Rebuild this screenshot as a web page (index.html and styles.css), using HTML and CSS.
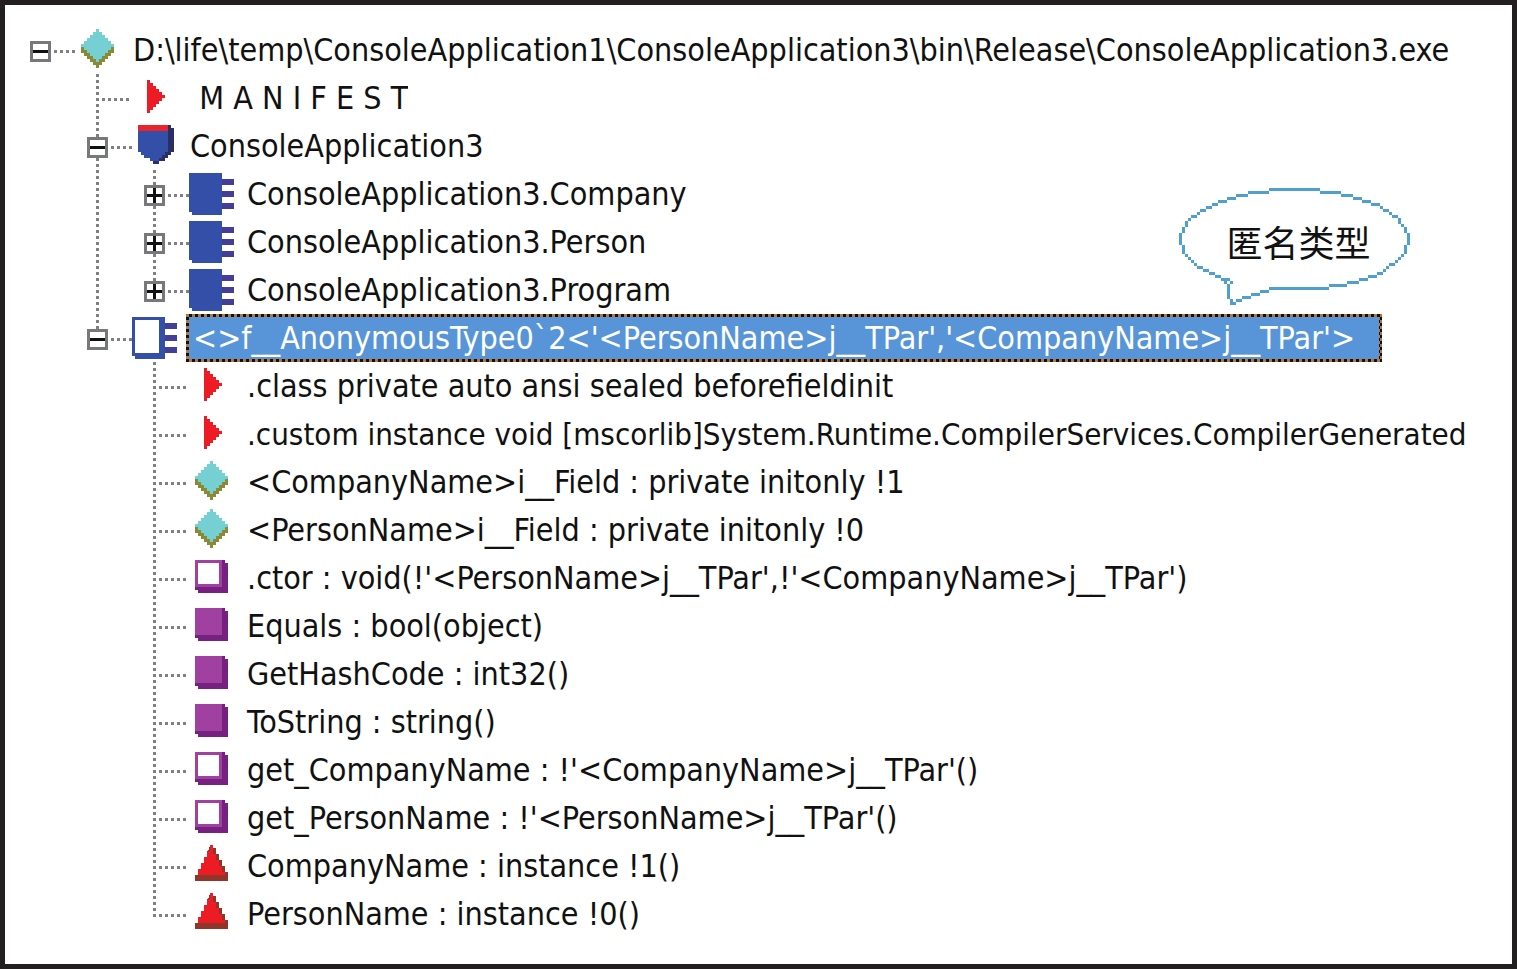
FILE: index.html
```
<!DOCTYPE html>
<html lang="zh-CN">
<head>
<meta charset="utf-8">
<title>ConsoleApplication3.exe</title>
<link rel="stylesheet" href="styles.css">
</head>
<body>
<svg class="sprites" aria-hidden="true">
  <symbol id="diamond" viewBox="0 0 16 16">
    <path fill="#8a8a35" d="M2 6h11v3h-1v1h-1v1h-1v1h-1v1h-1v1h-1v-1h-1v-1h-1v-1h-1v-1h-1v-1h-1z"/>
    <path fill="#74d0d2" d="M7 1h1v1h1v1h1v1h1v1h1v1h1v1h-1v1h-1v1h-1v1h-1v1h-1v1h-1v-1h-1v-1h-1v-1h-1v-1h-1v-1h-1v-1h1v-1h1v-1h1v-1h1v-1h1z"/>
  </symbol>
  <symbol id="arrow" viewBox="0 0 16 16">
    <path fill="#ed1c24" d="M5 2h1v1h1v1h1v1h1v1h1v1h1v1h-1v1h-1v1h-1v1h-1v1h-1v1h-1z"/>
  </symbol>
  <symbol id="shield" viewBox="0 0 16 16">
    <path fill="#2c2f66" d="M11 1h2v1h1v8h-1v1h-1v1h-1v1h-2v1h-2V8H11z"/>
    <path fill="#334fa8" d="M2 3h10v7h-1v1h-1v1h-1v1h-3v-1h-2v-1h-1v-1h-1z"/>
    <path fill="#e6252c" d="M2 1h10v2h-10z"/>
  </symbol>
  <symbol id="class" viewBox="0 0 16 16">
    <path fill="#433f99" d="M11 3h4v2h-4zM11 7h4v2h-4zM11 11h4v2h-4z"/>
    <path fill="#334fa8" d="M0 1h11v14h-10v-1h-1z"/>
  </symbol>
  <symbol id="class-open" viewBox="0 0 16 16">
    <path fill="#433f99" d="M11 3h4v2h-4zM11 7h4v2h-4zM11 11h4v2h-4z"/>
    <path fill="#334fa8" d="M0 1h11v14h-10v-1h-1z"/>
    <path fill="#fff" d="M1 2h8v11h-8z"/>
  </symbol>
  <symbol id="method" viewBox="0 0 16 16">
    <path fill="#76207f" d="M2 2h10v1h1v10h-10v-1h-1z"/>
    <path fill="#a041a2" d="M2 2h9v9h-9z"/>
  </symbol>
  <symbol id="method-open" viewBox="0 0 16 16">
    <path fill="#76207f" d="M2 2h10v1h1v10h-10v-1h-1z"/>
    <path fill="#a041a2" d="M2 2h9v9h-9z"/>
    <path fill="#fff" d="M3 3h7v7h-7z"/>
  </symbol>
  <symbol id="property" viewBox="0 0 16 16">
    <path fill="#8f3529" d="M7 1h1v1h1v2h1v2h1v2h1v2h1v3h-11v-2h2z"/>
    <path fill="#ed1c24" d="M7 1h1v3h1v2h1v2h1v2h1v1h-9v-2h1v-2h1v-2h1v-2h1z"/>
  </symbol>
</svg>

<main class="panel">
  <ul class="tree">
    <li>
      <div class="row"><button class="toggle" type="button" aria-expanded="true" aria-label="Collapse"></button><span class="wire"></span><svg class="icon"><use href="#diamond"/></svg><span class="label">D:\life\temp\ConsoleApplication1\ConsoleApplication3\bin\Release\ConsoleApplication3.exe</span></div>
      <ul class="branch">
        <li><div class="row leaf"><span class="wire"></span><svg class="icon"><use href="#arrow"/></svg><span class="label">&nbsp;M A N I F E S T</span></div></li>
        <li>
          <div class="row"><button class="toggle" type="button" aria-expanded="true" aria-label="Collapse"></button><span class="wire"></span><svg class="icon"><use href="#shield"/></svg><span class="label">ConsoleApplication3</span></div>
          <ul class="branch">
            <li><div class="row"><button class="toggle" type="button" aria-expanded="false" aria-label="Expand"></button><span class="wire"></span><svg class="icon"><use href="#class"/></svg><span class="label">ConsoleApplication3.Company</span></div></li>
            <li><div class="row"><button class="toggle" type="button" aria-expanded="false" aria-label="Expand"></button><span class="wire"></span><svg class="icon"><use href="#class"/></svg><span class="label">ConsoleApplication3.Person</span></div></li>
            <li><div class="row"><button class="toggle" type="button" aria-expanded="false" aria-label="Expand"></button><span class="wire"></span><svg class="icon"><use href="#class"/></svg><span class="label">ConsoleApplication3.Program</span></div></li>
          </ul>
        </li>
        <li>
          <div class="row"><button class="toggle" type="button" aria-expanded="true" aria-label="Collapse"></button><span class="wire"></span><svg class="icon"><use href="#class-open"/></svg><span class="label selected">&lt;&gt;f__AnonymousType0`2&lt;'&lt;PersonName&gt;j__TPar','&lt;CompanyName&gt;j__TPar'&gt;</span></div>
          <ul class="branch">
            <li><div class="row leaf"><span class="wire"></span><svg class="icon"><use href="#arrow"/></svg><span class="label">.class private auto ansi sealed beforefieldinit</span></div></li>
            <li><div class="row leaf"><span class="wire"></span><svg class="icon"><use href="#arrow"/></svg><span class="label long">.custom instance void [mscorlib]System.Runtime.CompilerServices.CompilerGenerated</span></div></li>
            <li><div class="row leaf"><span class="wire"></span><svg class="icon"><use href="#diamond"/></svg><span class="label">&lt;CompanyName&gt;i__Field : private initonly !1</span></div></li>
            <li><div class="row leaf"><span class="wire"></span><svg class="icon"><use href="#diamond"/></svg><span class="label">&lt;PersonName&gt;i__Field : private initonly !0</span></div></li>
            <li><div class="row leaf"><span class="wire"></span><svg class="icon"><use href="#method-open"/></svg><span class="label">.ctor : void(!'&lt;PersonName&gt;j__TPar',!'&lt;CompanyName&gt;j__TPar')</span></div></li>
            <li><div class="row leaf"><span class="wire"></span><svg class="icon"><use href="#method"/></svg><span class="label">Equals : bool(object)</span></div></li>
            <li><div class="row leaf"><span class="wire"></span><svg class="icon"><use href="#method"/></svg><span class="label">GetHashCode : int32()</span></div></li>
            <li><div class="row leaf"><span class="wire"></span><svg class="icon"><use href="#method"/></svg><span class="label">ToString : string()</span></div></li>
            <li><div class="row leaf"><span class="wire"></span><svg class="icon"><use href="#method-open"/></svg><span class="label">get_CompanyName : !'&lt;CompanyName&gt;j__TPar'()</span></div></li>
            <li><div class="row leaf"><span class="wire"></span><svg class="icon"><use href="#method-open"/></svg><span class="label">get_PersonName : !'&lt;PersonName&gt;j__TPar'()</span></div></li>
            <li><div class="row leaf"><span class="wire"></span><svg class="icon"><use href="#property"/></svg><span class="label">CompanyName : instance !1()</span></div></li>
            <li><div class="row leaf"><span class="wire"></span><svg class="icon"><use href="#property"/></svg><span class="label">PersonName : instance !0()</span></div></li>
          </ul>
        </li>
      </ul>
    </li>
  </ul>

  <div class="balloon">
    <svg class="balloon-shape" viewBox="0 0 77 39" aria-hidden="true">
      <path d="M30 0h17v1h-17zM23 1h7v1h-7zM47 1h7v1h-7zM19 2h4v1h-4zM54 2h4v1h-4zM16 3h3v1h-3zM58 3h3v1h-3zM13 4h3v1h-3zM61 4h3v1h-3zM11 5h2v1h-2zM64 5h3v1h-3zM9 6h2v1h-2zM67 6h1v1h-1zM7 7h2v1h-2zM68 7h2v1h-2zM6 8h1v1h-1zM70 8h1v1h-1zM4 9h2v1h-2zM71 9h2v1h-2zM3 10h1v1h-1zM73 10h1v2h-1zM2 11h1v2h-1zM74 12h1v1h-1zM1 13h1v2h-1zM75 13h1v2h-1zM0 15h1v4h-1zM76 15h1v4h-1zM1 19h1v3h-1zM75 19h1v3h-1zM2 22h1v1h-1zM74 22h1v1h-1zM3 23h1v1h-1zM73 23h1v1h-1zM4 24h1v1h-1zM72 24h1v1h-1zM5 25h1v1h-1zM70 25h2v1h-2zM6 26h2v1h-2zM69 26h1v1h-1zM8 27h2v1h-2zM68 27h1v1h-1zM10 28h2v1h-2zM66 28h2v1h-2zM12 29h2v1h-2zM63 29h3v1h-3zM14 30h3v1h-3zM60 30h3v1h-3zM15 31h1v1h-1zM17 31h1v1h-1zM56 31h4v1h-4zM16 32h1v5h-1zM50 32h6v1h-6zM30 33h20v1h-20zM27 34h3v1h-3zM24 35h3v1h-3zM21 36h3v1h-3zM17 37h1v2h-1zM19 37h2v1h-2zM18 38h1v1h-1z"/>
    </svg>
    <span class="balloon-text">匿名类型</span>
  </div>
</main>
</body>
</html>
```
FILE: styles.css
```
* {
  box-sizing: border-box;
}

body {
  margin: 0;
  background: #fff;
}

.sprites {
  display: none;
}

.panel {
  position: relative;
  min-height: 100vh;
  padding: 21px 36px 21px 25px;
  border: 5px solid #231f20;
  font-family: "DejaVu Sans Condensed", "DejaVu Sans", "Noto Sans CJK SC", sans-serif;
  font-size: 32px;
  color: #111;
}

.tree,
.branch {
  margin: 0;
  padding: 0;
  list-style: none;
}

.branch {
  padding-left: 57px;
}

/* dotted trunk that joins the siblings of one branch */
.branch > li {
  background: repeating-linear-gradient(#808080 0 3px, transparent 3px 6px) 9px 0 / 3px 100% no-repeat;
}

.branch > li:last-child {
  background-size: 3px 27px;
}

.row {
  display: flex;
  align-items: center;
  height: 48px;
}

.toggle {
  flex: none;
  width: 21px;
  height: 21px;
  margin: 3px 3px 0 0;
  padding: 0;
  border: 3px solid #77787b;
  border-radius: 0;
  background: linear-gradient(#111, #111) center / 15px 3px no-repeat #fff;
}

.toggle[aria-expanded="false"] {
  background:
    linear-gradient(#111, #111) center / 15px 3px no-repeat,
    linear-gradient(#111, #111) center / 3px 15px no-repeat #fff;
}

.wire {
  flex: none;
  width: 21px;
  height: 3px;
  margin-top: 3px;
  background: repeating-linear-gradient(90deg, #808080 0 3px, transparent 3px 6px);
}

.leaf .wire {
  width: 27px;
  margin-left: 15px;
  margin-right: 3px;
}

.icon {
  flex: none;
  width: 48px;
  height: 48px;
  margin-right: 6px;
  shape-rendering: crispEdges;
}

.label {
  min-width: 0;
  height: 48px;
  padding: 1px 0 0 1px;
  border: 3px solid transparent;
  border-right-width: 0;
  line-height: 40px;
  white-space: pre;
  overflow: hidden;
}

.long {
  font-size: 31px;
}

.selected {
  padding: 1px 24px 0 4px;
  border-right-width: 3px;
  color: #fff;
  background:
    linear-gradient(#5795d8, #5795d8) padding-box,
    repeating-conic-gradient(#111 0 25%, #b87440 0 50%) 0 0 / 6px 6px border-box;
  background-origin: padding-box, border-box;
}

/* callout laid over the tree */
.balloon {
  position: absolute;
  left: 1174px;
  top: 183px;
  display: grid;
  width: 231px;
  font-family: "Noto Sans CJK SC", sans-serif;
  font-size: 36px;
  line-height: 36px;
  color: #111;
}

.balloon-shape,
.balloon-text {
  grid-area: 1 / 1;
}

.balloon-shape {
  width: 100%;
  fill: #4f9fcf;
  shape-rendering: crispEdges;
}

.balloon-text {
  padding: 35px 0 0 8px;
  text-align: center;
}
```
